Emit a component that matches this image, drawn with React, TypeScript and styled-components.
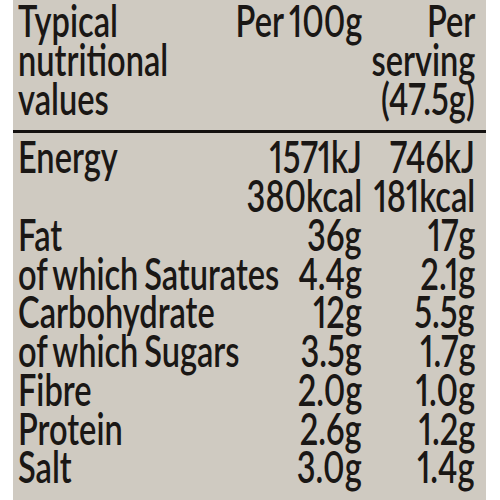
import React from 'react';
import styled, { createGlobalStyle } from 'styled-components';

const GlobalStyle = createGlobalStyle`
  html, body {
    margin: 0;
    padding: 0;
    background: #ffffff;
  }
  body {
    font-family: Lato, "Liberation Sans", sans-serif;
  }
`;

interface Nutrient {
  name: string;
  per100: string[];
  serving: string[];
}

const nutrients: Nutrient[] = [
  { name: 'Energy', per100: ['1571kJ', '380kcal'], serving: ['746kJ', '181kcal'] },
  { name: 'Fat', per100: ['36g'], serving: ['17g'] },
  { name: 'of which Saturates', per100: ['4.4g'], serving: ['2.1g'] },
  { name: 'Carbohydrate', per100: ['12g'], serving: ['5.5g'] },
  { name: 'of which Sugars', per100: ['3.5g'], serving: ['1.7g'] },
  { name: 'Fibre', per100: ['2.0g'], serving: ['1.0g'] },
  { name: 'Protein', per100: ['2.6g'], serving: ['1.2g'] },
  { name: 'Salt', per100: ['3.0g'], serving: ['1.4g'] },
];

export default function App() {
  return (
    <>
      <GlobalStyle />
      <Page>
        <Label>
          <Header>
            <NameCell>
              <Text>Typical</Text>
              <Text>nutritional</Text>
              <Text>values</Text>
            </NameCell>
            <ValueCell>
              <Text $align="right">Per 100g</Text>
            </ValueCell>
            <ValueCell>
              <Text $align="right">Per</Text>
              <Text $align="right">serving</Text>
              <Text $align="right">(47.5g)</Text>
            </ValueCell>
          </Header>
          <Rule />
          <Body>
            {nutrients.map((n) => (
              <Row key={n.name}>
                <NameCell>
                  <Text>{n.name}</Text>
                </NameCell>
                <ValueCell>
                  {n.per100.map((v) => (
                    <Text key={v} $align="right">{v}</Text>
                  ))}
                </ValueCell>
                <ValueCell>
                  {n.serving.map((v) => (
                    <Text key={v} $align="right">{v}</Text>
                  ))}
                </ValueCell>
              </Row>
            ))}
          </Body>
        </Label>
      </Page>
    </>
  );
}

const Page = styled.div`
  width: 500px;
  height: 500px;
  overflow: hidden;
  padding-left: 13px;
  box-sizing: border-box;
`;

const Label = styled.div`
  width: 473px;
  height: 500px;
  background: #cfcac1;
  color: #1a1715;
  box-sizing: border-box;
  padding: 1px 11px 0 5px;
`;

const Grid = styled.div`
  display: grid;
  grid-template-columns: minmax(0, 1fr) 120px 113px;
`;

const Header = styled(Grid)`
  padding-bottom: 13px;
`;

const Row = styled(Grid)``;

const Body = styled.div`
  display: flex;
  flex-direction: column;
  padding-top: 4px;
`;

const Rule = styled.div`
  height: 3px;
  margin: 0 -11px 0 -5px;
  background: #14110f;
`;

const NameCell = styled.div`
  display: flex;
  flex-direction: column;
  align-items: flex-start;
  min-width: 0;
`;

const ValueCell = styled.div`
  display: flex;
  flex-direction: column;
  align-items: flex-end;
  min-width: 0;
`;

const Text = styled.span<{ $align?: 'left' | 'right' }>`
  display: block;
  white-space: nowrap;
  font-size: 44px;
  font-weight: 600;
  line-height: 38.75px;
  word-spacing: -0.07em;
  font-variant-numeric: proportional-nums;
  transform: scaleX(0.74);
  transform-origin: ${(p) => (p.$align === 'right' ? 'right' : 'left')} center;
`;
